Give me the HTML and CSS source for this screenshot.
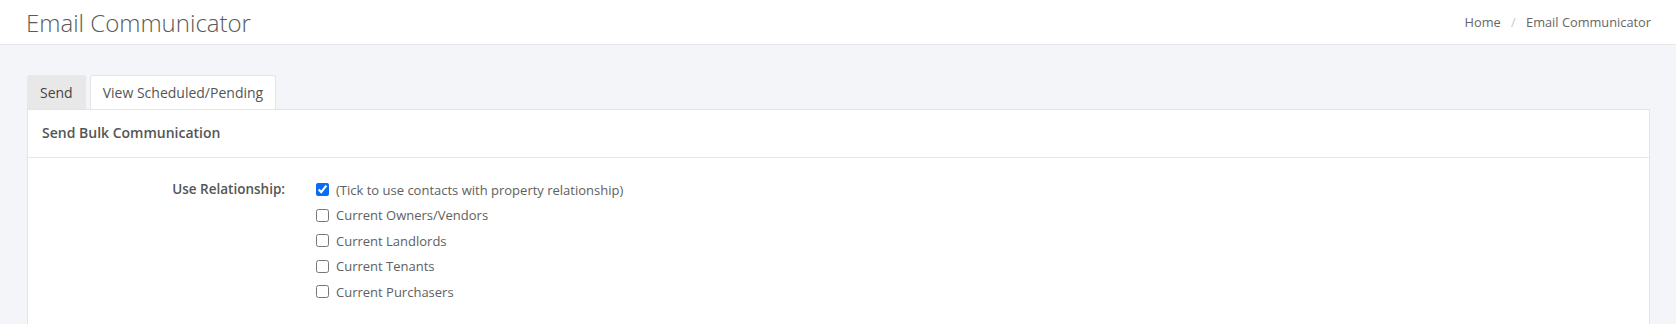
FILE: index.html
```html
<!DOCTYPE html>
<html lang="en">
<head>
  <meta charset="UTF-8" />
  <title>Email Communicator</title>
  <link rel="stylesheet" href="styles.css">
</head>
<body>

  <div class="page-header">
    <h1>Email Communicator</h1>
    <div class="breadcrumb">
      <a href="#">Home</a>
      <span class="sep">/</span>
      <span>Email Communicator</span>
    </div>
  </div>

  <div class="main">
    <!-- Tabs -->
    <div class="tabs">
      <div class="tab active">Send</div>
      <div class="tab">View Scheduled/Pending</div>
    </div>

    <div class="panel">
      <div class="panel-heading">Send Bulk Communication</div>
      <div class="panel-body">
        <div class="form-row">
          <label class="form-label">Use Relationship:</label>
          <div class="check-list">
            <label class="check"><input type="checkbox" checked> (Tick to use contacts with property relationship)</label>
            <label class="check"><input type="checkbox"> Current Owners/Vendors</label>
            <label class="check"><input type="checkbox"> Current Landlords</label>
            <label class="check"><input type="checkbox"> Current Tenants</label>
            <label class="check"><input type="checkbox"> Current Purchasers</label>
          </div>
        </div>
      </div>
    </div>
  </div>

</body>
</html>
```

FILE: styles.css
```css
* {
  margin: 0;
  padding: 0;
  box-sizing: border-box;
}

html, body {
  height: 100%;
}

body {
  font-family: 'Open Sans', 'Noto Sans', Arial, sans-serif;
  font-size: 14px;
  color: #555;
  background: #f4f5f8;
}

/* Header */
.page-header {
  height: 45px;
  background: #fff;
  border-bottom: 1px solid #e6e7ea;
  display: flex;
  justify-content: space-between;
  align-items: center;
  padding: 0 25px 0 26px;
}

.page-header h1 {
  font-size: 24px;
  font-weight: 300;
  color: #5a5a5a;
}

.breadcrumb {
  font-size: 12.8px;
  color: #666;
}

.breadcrumb a {
  color: #666;
  text-decoration: none;
}

.breadcrumb .sep {
  color: #c8c8c8;
  margin: 0 7px;
}

/* Main */
.main {
  padding: 30px 26px 0 27px;
}

.tabs {
  display: flex;
  gap: 4px;
}

.tab {
  height: 34px;
  line-height: 33px;
  padding: 0 12px;
  font-size: 14px;
  color: #555;
  background: #fff;
  border: 1px solid #e3e4e6;
  border-bottom: none;
  border-radius: 3px 3px 0 0;
}

.tab.active {
  background: #e8e8e9;
  border-color: #e8e8e9;
  color: #444;
}

.panel {
  background: #fff;
  border: 1px solid #e3e4e6;
  height: 220px;
}

.panel-heading {
  height: 48px;
  line-height: 46px;
  padding: 0 14px;
  font-weight: 600;
  font-size: 14px;
  color: #555;
  border-bottom: 1px solid #e6e7ea;
}

.panel-body {
  padding: 19px 0 0 0;
}

.form-row {
  display: flex;
}

.form-label {
  width: 257px;
  flex-shrink: 0;
  text-align: right;
  font-weight: 600;
  font-size: 13.5px;
  color: #555;
  line-height: 25px;
}

.check-list {
  display: flex;
  flex-direction: column;
  margin-left: 31px;
}

.check {
  display: flex;
  align-items: center;
  height: 25.5px;
  font-size: 13px;
  color: #606060;
}

.check input {
  width: 13px;
  height: 13px;
  margin: 0 7px 0 0;
  accent-color: #0a6cf5;
}
```
